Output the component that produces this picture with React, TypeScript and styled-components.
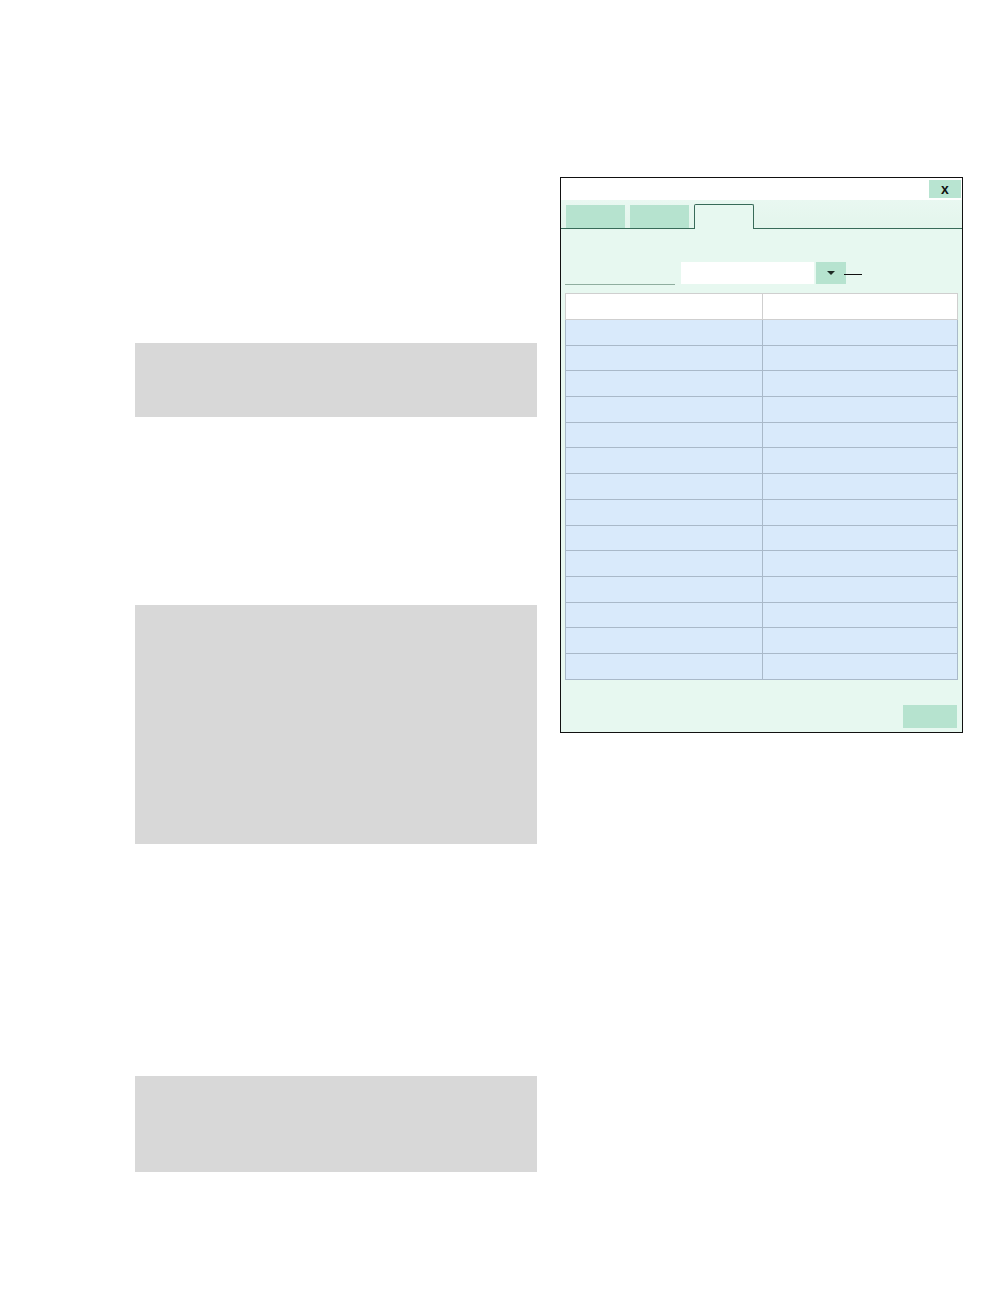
import styled, { createGlobalStyle } from 'styled-components';

const GlobalStyle = createGlobalStyle`
  html, body {
    margin: 0;
    padding: 0;
    background: #ffffff;
    font-family: "Liberation Sans", Arial, sans-serif;
  }
`;

const Page = styled.div`
  display: flex;
  align-items: flex-start;
  gap: 23px;
  padding-left: 135px;
  width: 1008px;
  height: 1296px;
  box-sizing: border-box;
`;

const LeftColumn = styled.div`
  display: flex;
  flex-direction: column;
  width: 402px;
  padding-top: 343px;
`;

const GrayBlock = styled.div<{ $h: number; $mt?: number }>`
  background: #d8d8d8;
  height: ${(p) => p.$h}px;
  margin-top: ${(p) => p.$mt ?? 0}px;
`;

const Dialog = styled.div`
  margin-top: 177px;
  width: 403px;
  height: 556px;
  box-sizing: border-box;
  border: 1px solid #111;
  display: flex;
  flex-direction: column;
  background: #ffffff;
`;

const TitleBar = styled.div`
  height: 22px;
  display: flex;
  justify-content: flex-end;
  align-items: flex-start;
  padding: 2px 1px 0 0;
  box-sizing: border-box;
`;

const CloseButton = styled.button`
  width: 32px;
  height: 18px;
  border: none;
  padding: 0;
  background: #b8e4d1;
  color: #111;
  font-family: "Liberation Sans", Arial, sans-serif;
  font-weight: bold;
  font-size: 14px;
  line-height: 17px;
  cursor: pointer;
`;

const TabStrip = styled.div`
  height: 29px;
  box-sizing: border-box;
  display: flex;
  align-items: flex-end;
  gap: 5px;
  padding-left: 5px;
  background: linear-gradient(#e9f8f1, #e3f5ec);
  border-bottom: 1px solid #386b59;
`;

const Tab = styled.div<{ $active?: boolean }>`
  width: ${(p) => (p.$active ? 60 : 59)}px;
  box-sizing: border-box;
  height: ${(p) => (p.$active ? 25 : 23)}px;
  background: ${(p) => (p.$active ? '#e7f8f0' : '#b6e3cf')};
  border: ${(p) => (p.$active ? '1px solid #386b59' : 'none')};
  border-bottom: none;
  border-radius: ${(p) => (p.$active ? '2px 2px 0 0' : '0')};
  margin-bottom: ${(p) => (p.$active ? -1 : 0)}px;
`;

const Body = styled.div`
  flex: 1;
  background: #e7f8f0;
  display: flex;
  flex-direction: column;
  padding: 33px 4px 4px 4px;
  box-sizing: border-box;
`;

const FieldRow = styled.div`
  display: flex;
  align-items: center;
  height: 22px;
`;

const LabelLine = styled.div`
  width: 110px;
  height: 22px;
  border-bottom: 1px solid #8fae9f;
  box-sizing: border-box;
  align-self: flex-end;
  margin-bottom: -1px;
`;

const Input = styled.div`
  width: 133px;
  height: 22px;
  background: #ffffff;
  margin-left: 6px;
`;

const DropButton = styled.div`
  width: 30px;
  height: 22px;
  background: #b6e3cf;
  margin-left: 2px;
  display: flex;
  align-items: center;
  justify-content: center;
`;

const Caret = styled.div`
  width: 0;
  height: 0;
  border-left: 4px solid transparent;
  border-right: 4px solid transparent;
  border-top: 4px solid #1d2a24;
`;

const Pointer = styled.div`
  width: 18px;
  height: 1px;
  background: #111;
  margin-left: -2px;
  align-self: center;
  margin-top: 2px;
`;

const Table = styled.table`
  margin-top: 9px;
  width: 393px;
  border-collapse: collapse;
  table-layout: fixed;
`;

const HeadCell = styled.th`
  height: 26px;
  padding: 0;
  background: #ffffff;
  border: 1px solid #cfcfcf;
  box-sizing: border-box;
`;

const Cell = styled.td`
  height: 25.7px;
  padding: 0;
  background: #d9eafb;
  border: 1px solid #a9b9c9;
  box-sizing: border-box;
`;

const Footer = styled.div`
  flex: 1;
  display: flex;
  justify-content: flex-end;
  align-items: flex-end;
  padding-right: 1px;
`;

const OkButton = styled.div`
  width: 54px;
  height: 23px;
  background: #b6e3cf;
`;

const rows = Array.from({ length: 14 }, (_, i) => i);

export default function App() {
  return (
    <>
      <GlobalStyle />
      <Page>
        <LeftColumn>
          <GrayBlock $h={74} />
          <GrayBlock $h={239} $mt={188} />
          <GrayBlock $h={96} $mt={232} />
        </LeftColumn>
        <Dialog>
          <TitleBar>
            <CloseButton>x</CloseButton>
          </TitleBar>
          <TabStrip>
            <Tab />
            <Tab />
            <Tab $active />
          </TabStrip>
          <Body>
            <FieldRow>
              <LabelLine />
              <Input />
              <DropButton>
                <Caret />
              </DropButton>
              <Pointer />
            </FieldRow>
            <Table>
              <colgroup>
                <col style={{ width: '197px' }} />
                <col />
              </colgroup>
              <thead>
                <tr>
                  <HeadCell />
                  <HeadCell />
                </tr>
              </thead>
              <tbody>
                {rows.map((r) => (
                  <tr key={r}>
                    <Cell />
                    <Cell />
                  </tr>
                ))}
              </tbody>
            </Table>
            <Footer>
              <OkButton />
            </Footer>
          </Body>
        </Dialog>
      </Page>
    </>
  );
}
